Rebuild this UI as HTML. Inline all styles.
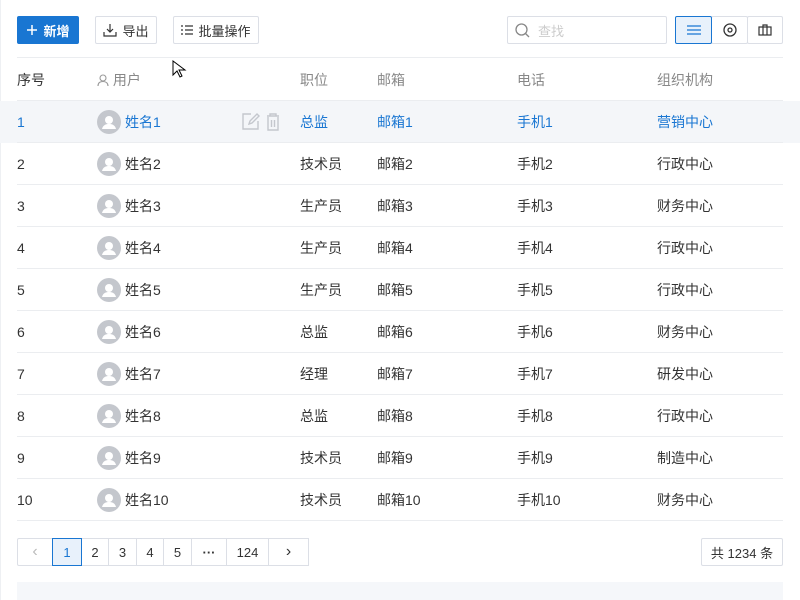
<!DOCTYPE html>
<html><head><meta charset="utf-8"><style>
*{box-sizing:border-box;margin:0;padding:0}
body{width:800px;height:600px;background:#fff;font-family:"Liberation Sans","Noto Sans CJK SC",sans-serif;font-size:14px;color:#333;position:relative;overflow:hidden}
.abs{position:absolute}
.btn{position:absolute;top:16px;height:28px;border:1px solid #dcdfe6;border-radius:2px;display:flex;align-items:center;justify-content:center;font-size:13px;color:#333;background:#fff;gap:5px}
.row{position:absolute;left:17px;width:766px;height:42px;border-bottom:1px solid #ebedf0}
.row span{position:absolute;top:0;line-height:42px}
.av{position:absolute;left:80px;top:9px;width:24px;height:24px;border-radius:50%;background:#c4c7cd;overflow:hidden}
.pg{position:absolute;top:538px;height:28px;border:1px solid #dcdfe6;display:flex;align-items:center;justify-content:center;font-size:13px;color:#333;background:#fff}
</style></head><body>
<div class="abs" style="left:0;top:0;width:1px;height:600px;background:#eef0f3"></div>
<div class="btn" style="left:17px;width:62px;background:#1976d2;border-color:#1976d2;color:#fff;font-weight:bold"><svg width="12" height="12"><path d="M6 1v10M1 6h10" stroke="#fff" stroke-width="1.5"/></svg>新增</div>
<div class="btn" style="left:95px;width:62px"><svg width="14" height="14" fill="none" stroke="#333" stroke-width="1.2"><path d="M7 1v8M4 6l3 3 3-3M1 9v4h12V9"/></svg>导出</div>
<div class="btn" style="left:173px;width:86px"><svg width="12" height="10" stroke="#333" stroke-width="1.2"><path d="M0 1h2M4 1h8M0 5h2M4 5h8M0 9h2M4 9h8"/></svg>批量操作</div>
<div class="btn" style="left:507px;width:160px;justify-content:flex-start;padding-left:7px;color:#ccc;gap:8px"><svg width="15" height="15" fill="none" stroke="#888" stroke-width="1.3"><circle cx="6.5" cy="6.5" r="5.5"/><path d="M10.5 10.5l3.5 3.5"/></svg>查找</div>
<div class="btn" style="left:675px;width:37px;border-color:#1976d2;background:#e8f1fb;z-index:2"><svg width="14" height="10" stroke="#1976d2" stroke-width="1.3"><path d="M0 1h14M0 5h14M0 9h14"/></svg></div>
<div class="btn" style="left:711px;width:37px"><svg width="14" height="14" fill="none" stroke="#333" stroke-width="1.3"><circle cx="7" cy="7" r="6"/><circle cx="7" cy="7" r="2"/></svg></div>
<div class="btn" style="left:747px;width:36px"><svg width="14" height="12" fill="none" stroke="#333" stroke-width="1.2"><rect x="1" y="3" width="12" height="8"/><path d="M5 3V1h4v2M5 3v8M9 3v8"/></svg></div>
<div class="abs" style="left:17px;top:57px;width:766px;border-top:1px solid #ebedf0"></div>
<div class="row" style="top:59px;color:#888"><span style="left:0;color:#333">序号</span><span style="left:80px"><svg width="12" height="12" fill="none" stroke="#999" stroke-width="1.1" style="vertical-align:-1px"><circle cx="6" cy="4" r="3"/><path d="M1 12c0-3 2-4.5 5-4.5s5 1.5 5 4.5"/></svg> 用户</span><span style="left:283px">职位</span><span style="left:360px">邮箱</span><span style="left:500px">电话</span><span style="left:640px">组织机构</span></div>
<div class="abs" style="left:0;top:101px;width:800px;height:42px;background:#f4f6f9"></div>
<div id="rows"></div>
<script>
var d=[["总监","营销中心"],["技术员","行政中心"],["生产员","财务中心"],["生产员","行政中心"],["生产员","行政中心"],["总监","财务中心"],["经理","研发中心"],["总监","行政中心"],["技术员","制造中心"],["技术员","财务中心"]];
var h="";
d.forEach(function(r,i){var n=i+1,c=n==1?"color:#1976d2":"";
h+='<div class="row" style="top:'+(101+42*i)+'px;'+c+'"><span style="left:0">'+n+'</span><div class="av"><svg width="24" height="24"><circle cx="12" cy="10" r="4" fill="#fff"/><path d="M5 19c1-4 4-5 7-5s6 1 7 5z" fill="#fff"/></svg></div><span style="left:108px">姓名'+n+'</span>'+(n==1?'<span style="left:224px;top:11px;line-height:0"><svg width="42" height="20" fill="none" stroke="#c4c7cd" stroke-width="1.4"><path d="M10 2H2v15h15V9M8 12l1-3 7-7 2 2-7 7z"/><path d="M26 4h12M29 4V2h6v2M27 5v13h10V5M30.5 8v7M33.5 8v7"/></svg></span>':'')+'<span style="left:283px">'+r[0]+'</span><span style="left:360px">邮箱'+n+'</span><span style="left:500px">手机'+n+'</span><span style="left:640px">'+r[1]+'</span></div>';});
document.getElementById("rows").innerHTML=h;
</script>
<div class="pg" style="left:17px;width:36px;color:#bbb;border-radius:2px 0 0 2px;font-size:16px">&lsaquo;</div>
<div class="pg" style="left:52px;width:30px;border-color:#1976d2;background:#e8f1fb;color:#1976d2;z-index:2">1</div>
<div class="pg" style="left:81px;width:28px">2</div>
<div class="pg" style="left:108px;width:29px">3</div>
<div class="pg" style="left:136px;width:28px">4</div>
<div class="pg" style="left:163px;width:29px">5</div>
<div class="pg" style="left:191px;width:36px;font-weight:bold">···</div>
<div class="pg" style="left:226px;width:43px">124</div>
<div class="pg" style="left:268px;width:41px;font-size:16px">&rsaquo;</div>
<div class="pg" style="left:701px;width:82px;border-radius:2px">共 1234 条</div>
<div class="abs" style="left:17px;top:582px;width:766px;height:18px;background:#f5f7fa"></div>
<svg class="abs" style="left:172px;top:60px" width="16" height="20"><path d="M1 1v14l4-4 3 6 2-1-3-6h6z" fill="#fff" stroke="#000" stroke-width="1"/></svg>
</body></html>
